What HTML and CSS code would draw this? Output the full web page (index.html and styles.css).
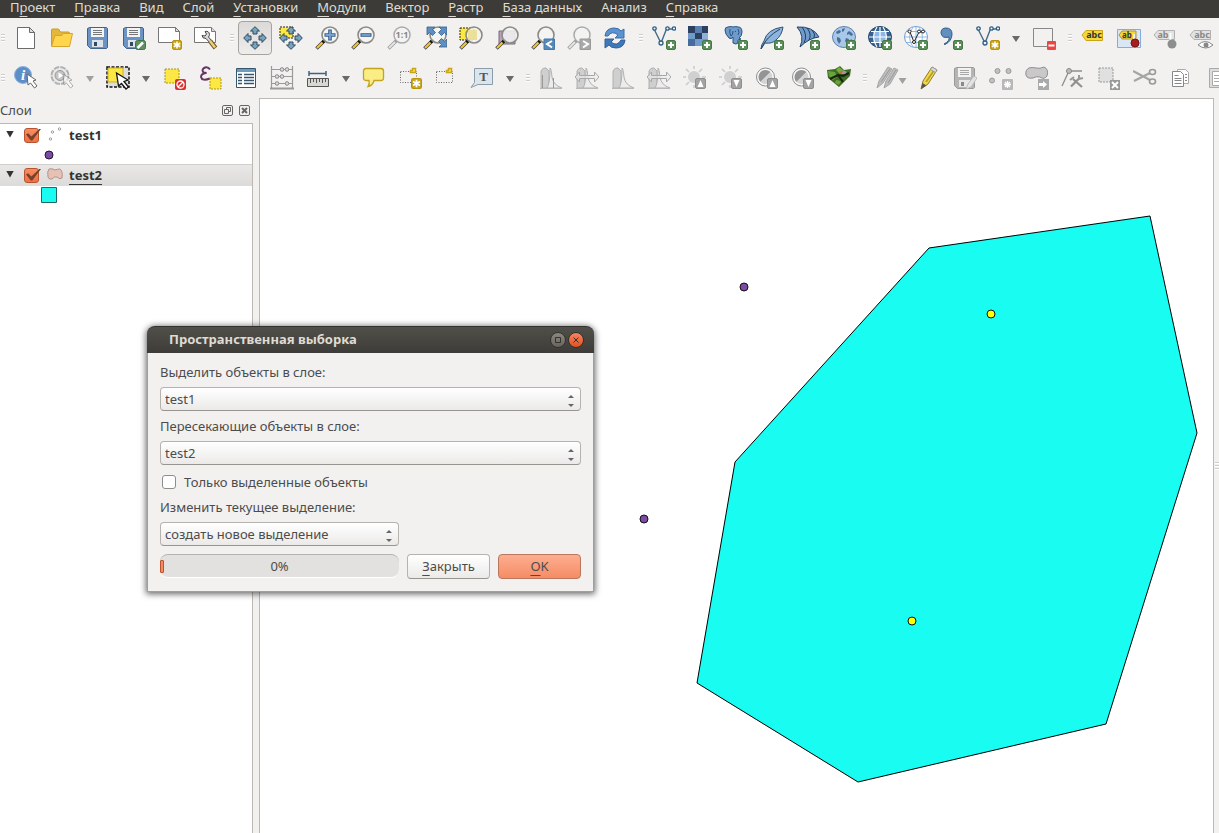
FILE: index.html
```
<!DOCTYPE html>
<html lang="ru">
<head>
    <meta charset="UTF-8">
    <title>QGIS</title>
    <link rel="stylesheet" href="styles.css">
</head>
<body>
    <!-- shared icon parts -->
    <svg class="defs" aria-hidden="true">
        <symbol id="plus" viewBox="0 0 10 10"><rect x=".5" y=".5" width="9" height="9" rx="1.5" fill="#5b905b" stroke="#457a47"/><path d="M5 2v6M2 5h6" stroke="#fff" stroke-width="2"/></symbol>
        <symbol id="star" viewBox="0 0 10 10"><rect x=".5" y=".5" width="9" height="9" rx="1.5" fill="#c9a51c" stroke="#b8930d"/><path d="M5 1.5v7M1.8 3.2l6.4 3.6M8.2 3.2L1.8 6.8" stroke="#fff" stroke-width="1.6"/></symbol>
        <symbol id="up" viewBox="0 0 11 11"><rect x=".5" y=".5" width="10" height="10" rx="1.5" fill="#a3a3a3" stroke="#8e8e8e"/><path d="M5.5 2l3 7h-6z" fill="#fff"/></symbol>
        <symbol id="down" viewBox="0 0 11 11"><rect x=".5" y=".5" width="10" height="10" rx="1.5" fill="#a3a3a3" stroke="#8e8e8e"/><path d="M5.5 9l3-7h-6z" fill="#fff"/></symbol>
        <symbol id="lens" viewBox="0 0 24 24"><path d="M9 15l-7.5 7.5" stroke="#444" stroke-width="3.6"/><path d="M8 16l-6 6" stroke="#f7c52c" stroke-width="2.2"/><path d="M10.5 13.5l-3 3" stroke="#111" stroke-width="3"/><circle cx="15" cy="9" r="8" fill="#f5f5f3" fill-opacity=".85" stroke="#8a8a86" stroke-width="1.6"/></symbol>
        <symbol id="lens-off" viewBox="0 0 24 24"><path d="M10 14l-8.5 8.5" stroke="#999" stroke-width="3.4"/><path d="M8 16l-6 6" stroke="#e4e4e4" stroke-width="2"/><circle cx="15" cy="9" r="8" fill="#f3f3f2" stroke="#aaa" stroke-width="1.5"/></symbol>
        <symbol id="cursor" viewBox="0 0 12 16"><path d="M1 1l1 11 2.500-2 4 5 2.500-2-4-5L10 7z" fill="#fff" stroke="#666"/></symbol>
        <symbol id="cross" viewBox="0 0 24 24"><path d="M12 .7L16.500 5H14v3h-4V5H7.500zM12 23.300L16.500 19H14v-3h-4v3H7.500zM.7 12L5 7.500V10h3v4H5v2.500zM23.300 12L19 7.500V10h-3v4h3v2.500z" fill="#7aa3bb" stroke="#2c4b63"/></symbol>
        <symbol id="nodes" viewBox="0 0 24 24"><path d="M2 3l7 14 5.500-14H22" fill="none" stroke="#456b85" stroke-width="1.4"/><g fill="#eef5fa" stroke="#2f5f86" stroke-width="1.3"><circle cx="2.500" cy="2.500" r="1.700"/><circle cx="9" cy="17" r="2"/><circle cx="15.500" cy="2.500" r="1.700"/><circle cx="22" cy="2.500" r="1.700"/></g></symbol>
        <symbol id="disk" viewBox="0 0 24 24"><path d="M3.500 1.500h17l1 1v19l-1 1h-16l-3-3v-17z" fill="#6b93c4" stroke="#41638b"/><path d="M5 2h13v9H5z" fill="#f3f3f3"/><path d="M7 4.500h9M7 6.500h9M7 8.500h9" stroke="#777"/><path d="M6 14h11v7H6z" fill="#dde3ea"/><path d="M8 16h3v4H8z" fill="#2f4864"/></symbol>
        <symbol id="hist" viewBox="0 0 24 24"><path d="M2 22V5q2-4 5-3l3 3v17z" fill="#cfcfcf" stroke="#b0b0b0"/><path d="M8 22q3-4 3-20 1 0 2 9 1 8 10 11z" fill="#ececec" stroke="#b0b0b0"/><path d="M1 22.500h22" stroke="#b8b8b8"/></symbol>
        <symbol id="span" viewBox="0 0 24 24"><path d="M0 11l4.500-5v3.500h15V6l4.500 5-4.500 5v-3.500h-15V16z" fill="#ededed" fill-opacity=".6" stroke="#a8a8a8"/></symbol>
        <symbol id="bulb" viewBox="0 0 24 24"><g stroke="#cacaca" stroke-width="1.5"><path d="M11 0v3M11 19v3M0 11h3M19 11h4M3 3l3 3M16 6l3-3M3 19l3-3"/></g><circle cx="11" cy="11" r="6" fill="#d0d0d0"/></symbol>
        <symbol id="half" viewBox="0 0 24 24"><circle cx="10.500" cy="11" r="9" fill="#fafafa" stroke="#8d8d8d"/><path d="M15.500 6a7 7 0 1 0-10 10z" fill="#949494"/><path d="M15.500 6a7 7 0 0 1-10 10z" fill="#d4d4d4"/></symbol>
    </svg>

    <nav class="menubar">
        <button>П<u>р</u>оект</button>
        <button><u>П</u>равка</button>
        <button><u>В</u>ид</button>
        <button>С<u>л</u>ой</button>
        <button><u>У</u>становки</button>
        <button><u>М</u>одули</button>
        <button>Век<u>т</u>ор</button>
        <button><u>Р</u>астр</button>
        <button><u>Б</u>аза данных</button>
        <button>Анализ</button>
        <button><u>С</u>правка</button>
    </nav>

    <div class="toolbar">
        <span class="grip first"></span>
        <button class="tool" aria-label="Новый"><svg viewBox="0 0 24 24"><path d="M3.500 1.500h12l5 5v16h-17z" fill="#fff" stroke="#6b6b6b"/><path d="M15.500 1.500v5h5z" fill="#ddd" stroke="#6b6b6b"/></svg></button>
        <button class="tool" aria-label="Открыть"><svg viewBox="0 0 24 24"><path d="M1.500 20V4q0-1 1-1h6l2 3h8q1 0 1 1v3" fill="#e3b63c" stroke="#c99c26"/><path d="M1.500 20.500L5 9.500h7l1-2h9.500l-3 13z" fill="#ffd54b" stroke="#d5a62e"/></svg></button>
        <button class="tool" aria-label="Сохранить"><svg viewBox="0 0 24 24"><use href="#disk"/></svg></button>
        <button class="tool" aria-label="Сохранить как"><svg viewBox="0 0 24 24"><use href="#disk"/><rect x="13.500" y="14.500" width="10" height="9" rx="2" fill="#5b9160" stroke="#3f7445"/><path d="M15.500 22l5.500-5.500" stroke="#fff" stroke-width="2.500"/></svg></button>
        <button class="tool" aria-label="Новая компоновка"><svg viewBox="0 0 24 24"><path d="M.5 1.500h17l4 4v11H.5z" fill="#fff" stroke="#777"/><path d="M17.500 1.500v4h4z" fill="#ddd" stroke="#777"/><use href="#star" x="14" y="14" width="10" height="10"/></svg></button>
        <button class="tool" aria-label="Управление компоновками"><svg viewBox="0 0 24 24"><path d="M.5 1.500h17l4 4v11H.5z" fill="#fff" stroke="#777"/><path d="M17.500 1.500v4h4" fill="#ddd" stroke="#777"/><path d="M8 9.500l3 .5 1.500-2L11 5.500q4-1 4.500 3 0 1-1 2.500l3.500 4-2 2-4-4.500q-4 0-4-3z" fill="#d8d8d8" stroke="#444"/><path d="M16 15l5.500 7" stroke="#705822" stroke-width="4.500"/><path d="M16 15l5 6.500" stroke="#efcf78" stroke-width="2.500"/></svg></button>
        <span class="grip"></span>
        <button class="tool pressed" aria-label="Прокрутка карты"><svg viewBox="0 0 24 24"><use href="#cross"/></svg></button>
        <button class="tool" aria-label="Прокрутка к выделенному"><svg viewBox="0 0 24 24"><path d="M1 1h13v11H1z" fill="#fde742" stroke="#222" stroke-dasharray="2 1"/><use href="#cross"/></svg></button>
        <button class="tool" aria-label="Увеличить"><svg viewBox="0 0 24 24"><use href="#lens"/><path d="M15 3.500v11M9.500 9h11" stroke="#335d8c" stroke-width="3.6"/><path d="M15 4.500v9M10.500 9h9" stroke="#77a2d2" stroke-width="1.800"/></svg></button>
        <button class="tool" aria-label="Уменьшить"><svg viewBox="0 0 24 24"><use href="#lens"/><path d="M9.500 9h11" stroke="#335d8c" stroke-width="3.6"/><path d="M10.500 9h9" stroke="#77a2d2" stroke-width="1.800"/></svg></button>
        <button class="tool" aria-label="Масштаб 1:1"><svg viewBox="0 0 24 24"><use href="#lens-off"/><text x="15" y="12" class="glyph" text-anchor="middle">1:1</text></svg></button>
        <button class="tool" aria-label="Полный охват"><svg viewBox="0 0 24 24"><use href="#lens"/><path d="M4 1h8L9.500 3.500l3 3-3 3-3-3L4 9zM24 1v8l-2.500-2.500-3 3-3-3 3-3L16 1zM24 21h-8l2.500-2.500-3-3 3-3 3 3L24 13z" fill="#5f8fc0" stroke="#355f8b" stroke-width=".8"/></svg></button>
        <button class="tool" aria-label="Увеличить до выделения"><svg viewBox="0 0 24 24"><path d="M1 2h14v12H1z" fill="#fde742" stroke="#222" stroke-dasharray="2 1"/><use href="#lens"/><path d="M9 4h9v10H9z" fill="#e9dc86" fill-opacity=".8"/></svg></button>
        <button class="tool" aria-label="Увеличить до слоя"><svg viewBox="0 0 24 24"><path d="M4 5h16v13H4z" fill="#b7a4b8" stroke="#796a7c"/><use href="#lens"/></svg></button>
        <button class="tool" aria-label="Предыдущий охват"><svg viewBox="0 0 24 24"><use href="#lens"/><path d="M13 13h10.500v10.500H13z" fill="#5688b8" stroke="#4677a8"/><path d="M21 15l-5 3 5 3.500" fill="none" stroke="#fff" stroke-width="2"/></svg></button>
        <button class="tool" aria-label="Следующий охват"><svg viewBox="0 0 24 24"><use href="#lens-off"/><path d="M13 13h10.500v10.500H13z" fill="#a9a9a9" stroke="#999"/><path d="M16 15l5 3-5 3.500" fill="none" stroke="#fff" stroke-width="2"/></svg></button>
        <button class="tool" aria-label="Обновить"><svg viewBox="0 0 24 24"><path d="M2 10Q3 2 11 2q5 0 7 3l3-2v9h-9l3-3q-6-5-10 1z" fill="#5b92d0" stroke="#3a6ca8"/><path d="M22 14q-1 8-9 8-5 0-7-3l-4 3v-9h9l-3 3q6 5 10-2z" fill="#3f78b8" stroke="#2f609a"/></svg></button>
        <span class="grip"></span>
        <button class="tool" aria-label="Добавить векторный слой"><svg viewBox="0 0 24 24"><use href="#nodes"/><use href="#plus" x="14" y="14" width="10" height="10"/></svg></button>
        <button class="tool" aria-label="Добавить растровый слой"><svg viewBox="0 0 24 24"><path d="M0 0h20v20H0z" fill="#6f9bcc"/><path d="M7 0h7v7H7z" fill="#587dae"/><path d="M0 0h7v7H0zM14 0h6v7h-6zM7 7h7v6H7z" fill="#2b3f5f"/><path d="M0 13h7v7H0z" fill="#456c9c"/><path d="M14 7h6v6h-6z" fill="#8db1da"/><use href="#plus" x="14" y="14" width="10" height="10"/></svg></button>
        <button class="tool" aria-label="Добавить слой PostGIS"><svg viewBox="0 0 24 24"><path d="M4 1q3-1 5 0 3-1 5 0 4 0 4 5 0 4-3 6l2 1-3 1v3q-2 2-5 0v-6q-2 3-4 1Q1 8 1 4q0-3 3-3z" fill="#6f9bcc" stroke="#29527f"/><path d="M6 3q-1 4 1 7 2-1 2-5M14 3q2 4 0 6M11.500 5v1" fill="none" stroke="#29527f"/><use href="#plus" x="14" y="14" width="10" height="10"/></svg></button>
        <button class="tool" aria-label="Добавить слой SpatiaLite"><svg viewBox="0 0 24 24"><path d="M1 23q0-4 3-8 3-12 19-14-1 8-7 13-4 4-11 3z" fill="#8db4dc" stroke="#30527a"/><path d="M1 23Q6 11 20 3" fill="none" stroke="#244465"/><use href="#plus" x="14" y="14" width="10" height="10"/></svg></button>
        <button class="tool" aria-label="Добавить слой MSSQL"><svg viewBox="0 0 24 24"><path d="M1 1q16-1 22 10-10 1-19 10Q9 10 1 1z" fill="#6f9bcc" stroke="#244465"/><path d="M6 1q6 8 2 16M11 2q5 6 2 12M16 4q4 4 2 8" fill="none" stroke="#20405f"/><use href="#plus" x="14" y="14" width="10" height="10"/></svg></button>
        <button class="tool" aria-label="Добавить слой WMS"><svg viewBox="0 0 24 24"><ellipse cx="12" cy="11" rx="11.500" ry="10.500" fill="#a9c7e8" stroke="#6080a8"/><path d="M4 6l3-2 2 1-1 2-3 1zM10 3l3-1-1 3-2 1zM5 11l3 1 1 3-2 3-2-4zM15 7l2-2 3 2 1 2-2 1-2-2-2 1zM14 12l3 1-1 4-1 1-2-3zM18 14l2-1-1 3z" fill="#47709f"/><use href="#plus" x="14" y="14" width="10" height="10"/></svg></button>
        <button class="tool" aria-label="Добавить слой WCS"><svg viewBox="0 0 24 24"><ellipse cx="12" cy="11" rx="11.500" ry="10.500" fill="#37628f" stroke="#24486e"/><path d="M6 6h12v10H6z" fill="#8db7e4"/><path d="M1 11h22M3 5.500h18M3 16.500h18M12 1v20M9 1q-7 10 0 20M15 1q7 10 0 20" fill="none" stroke="#fff" stroke-width="1.2"/><use href="#plus" x="14" y="14" width="10" height="10"/></svg></button>
        <button class="tool" aria-label="Добавить слой WFS"><svg viewBox="0 0 24 24"><ellipse cx="12" cy="11" rx="11.500" ry="10.500" fill="#fff" stroke="#6d9dd6"/><path d="M1 11h22M3 5.500h18M3 16.500h18M12 1v20M9 1q-7 10 0 20M15 1q7 10 0 20" fill="none" stroke="#94b8e2"/><path d="M6 6l4 10 5-10h4" fill="none" stroke="#222"/><g fill="#fff" stroke="#222"><circle cx="5.500" cy="5.500" r="1.500"/><circle cx="10" cy="16" r="1.500"/><circle cx="15" cy="5.500" r="1.500"/><circle cx="19" cy="5.500" r="1.500"/></g><use href="#plus" x="14" y="14" width="10" height="10"/></svg></button>
        <button class="tool" aria-label="Добавить текст с разделителями"><svg viewBox="0 0 24 24"><path d="M4 18q6-3 5-7-7 2-8-4Q1 2 6 2q6 0 6 6 0 7-7 10.500z" fill="#608fc0" stroke="#315b89"/><use href="#plus" x="13" y="14" width="10" height="10"/></svg></button>
        <button class="tool" aria-label="Создать слой"><svg viewBox="0 0 24 24"><use href="#nodes"/><use href="#star" x="14" y="14" width="10" height="10"/></svg></button>
        <button class="drop" aria-label="Ещё слои"></button>
        <button class="tool" aria-label="Удалить слой"><svg viewBox="0 0 24 24"><path d="M1.500 2.500h19v18h-19z" fill="#f2f1f0" stroke="#888"/><rect x="15" y="15" width="9" height="9" rx="1" fill="#ef4444"/><path d="M16.500 19.500h6" stroke="#fff" stroke-width="2"/></svg></button>
        <span class="grip"></span>
        <button class="tool" aria-label="Подписи"><svg viewBox="0 0 24 24"><path d="M1 9l4-4.500h16.500v10H5z" fill="#f5d73a" stroke="#c9a51c"/><text x="13" y="12" class="tag" text-anchor="middle">abc</text></svg></button>
        <button class="tool" aria-label="Закрепить подписи"><svg viewBox="0 0 24 24"><path d="M.5 3.500h23v18H.5z" fill="#d8e6f5" stroke="#80aee0"/><path d="M2 9l3-4h14v8H5z" fill="#f5d73a" stroke="#b5942c"/><text x="10" y="12" class="tag small" text-anchor="middle">ab</text><path d="M17 8v7" stroke="#eee" stroke-width="2"/><circle cx="18" cy="17" r="4" fill="#a42020" stroke="#801010"/></svg></button>
        <button class="tool" aria-label="Показать закреплённые"><svg viewBox="0 0 24 24"><path d="M1 9l4-4.500h16.500v9H5z" fill="#e2e2e2" stroke="#b0b0b0"/><text x="10" y="12" class="tag off" text-anchor="middle">ab</text><path d="M17.500 7v8" stroke="#fff" stroke-width="2"/><circle cx="19" cy="18" r="4.500" fill="#8d8d8d"/></svg></button>
        <button class="tool" aria-label="Скрыть подписи"><svg viewBox="0 0 24 24"><path d="M1 9l4-4.500h16.500v9H5z" fill="#e2e2e2" stroke="#b0b0b0"/><text x="13" y="12" class="tag off" text-anchor="middle">abc</text><path d="M9 19q7-7 15 0-7 6-15 0z" fill="#fff" stroke="#888"/><circle cx="17" cy="19" r="2.500" fill="#888"/></svg></button>
    </div>

    <div class="toolbar">
        <span class="grip first"></span>
        <button class="tool" aria-label="Определить"><svg viewBox="0 0 24 24"><circle cx="9" cy="9" r="8.500" fill="#5c8fc8" stroke="#8fb2da"/><text x="9" y="14" class="info" text-anchor="middle">i</text><use href="#cursor" x="12" y="7" width="12" height="16"/></svg></button>
        <button class="tool" aria-label="Выполнить действие"><svg viewBox="0 0 24 24"><circle cx="10" cy="9.500" r="8.500" fill="#e9e9e9" stroke="#b0b0b0" stroke-width="2" stroke-dasharray="5.500 1.200"/><circle cx="10" cy="9.500" r="5" fill="#c4c4c4" stroke="#999"/><path d="M8.500 6.500l5 3-5 3z" fill="#fff"/><use href="#cursor" x="12" y="7" width="12" height="16" opacity=".5"/></svg></button>
        <button class="drop off" aria-label="Действия"></button>
        <button class="tool" aria-label="Выделить объекты"><svg viewBox="0 0 24 24"><path d="M1 1h22v20H1z" fill="#ddd" stroke="#111" stroke-width="1.500" stroke-dasharray="3 1.500"/><path d="M2 2h15v14H2z" fill="#fde742" stroke="#c7b32c"/><path d="M10.500 7l2 13 3-2.500 4.500 5.500 2.500-2-4.500-5.500 4-1.500z" fill="#fff" stroke="#111" stroke-width="1.300"/></svg></button>
        <button class="drop" aria-label="Способ выделения"></button>
        <button class="tool" aria-label="Снять выделение"><svg viewBox="0 0 24 24"><path d="M3 3h14v14H3z" fill="#fde742" stroke="#a8952a" stroke-dasharray="2 1"/><rect x="13" y="13" width="11" height="11" rx="2" fill="#da3030"/><circle cx="18.500" cy="18.500" r="3.500" fill="none" stroke="#fff" stroke-width="1.300"/><path d="M16 21l5-5" stroke="#fff" stroke-width="1.300"/></svg></button>
        <button class="tool" aria-label="Выделить по выражению"><svg viewBox="0 0 24 24"><path d="M12 3.500Q10 .5 7 1.500q-4 2-1.500 5l3 .5Q3 7.500 3 11q1 4.500 9 1.500" fill="none" stroke="#673764" stroke-width="2"/><path d="M12 12h11v11H12z" fill="#fde742" stroke="#a8952a" stroke-dasharray="2 1"/></svg></button>
        <button class="tool" aria-label="Таблица атрибутов"><svg viewBox="0 0 24 24"><path d="M2.500 2.500h19v19h-19z" fill="#fff" stroke="#35566f"/><path d="M3 3h18v3H3z" fill="#6d9cbb"/><path d="M4 8.500h4M10 8.500h10M4 11.500h4M10 11.500h10M4 14.500h4M10 14.500h10M4 17.500h4M10 17.500h10" stroke="#35566f" stroke-width="1.400"/></svg></button>
        <button class="tool" aria-label="Калькулятор полей"><svg viewBox="0 0 24 24"><path d="M1.500 0v22M22.500 0v22M2 3.500h20M2 10.500h20M2 17.500h20" fill="none" stroke="#9a9a9a" stroke-width="1.2"/><path d="M0 22.500h24" stroke="#9a9a9a" stroke-width="2"/><g fill="#ddd" stroke="#888"><circle cx="12" cy="3.500" r="1.800"/><circle cx="17" cy="3.500" r="1.800"/><circle cx="7" cy="10.500" r="1.800"/><circle cx="12" cy="10.500" r="1.800"/><circle cx="7" cy="17.500" r="1.800"/><circle cx="17" cy="17.500" r="1.800"/></g></svg></button>
        <button class="tool" aria-label="Измерить линию"><svg viewBox="0 0 24 24"><path d="M3 7.500h17M3 5v5M20 5v5" stroke="#3c6482" stroke-width="1.500"/><path d="M1.500 12.500h21v8h-21z" fill="#d8d8d2" stroke="#555"/><path d="M4.500 13v4M7.500 13v3M10.500 13v4M13.500 13v3M16.500 13v4M19.500 13v3" stroke="#555"/></svg></button>
        <button class="drop" aria-label="Измерения"></button>
        <button class="tool" aria-label="Всплывающие описания"><svg viewBox="0 0 24 24"><path d="M4 2.500h15q2.500 0 2.500 2.500v7q0 2.500-2.500 2.500h-7q-1 5-6 6 2-3 1-6H4Q1.500 14.500 1.500 12V5Q1.500 2.500 4 2.500z" fill="#fbed86" stroke="#c3a420" stroke-width="1.300"/></svg></button>
        <button class="tool" aria-label="Новая закладка"><svg viewBox="0 0 24 24"><path d="M2.500 5.500h16v11h-16z" fill="none" stroke="#666" stroke-dasharray="1 1.500"/><path d="M14.500 2.500h3v4h-5v-2h2z" fill="#fde742" stroke="#c9a51c" stroke-width="1.500"/><use href="#star" x="13" y="12" width="11" height="11"/></svg></button>
        <button class="tool" aria-label="Закладки"><svg viewBox="0 0 24 24"><path d="M2.500 5.500h16v11h-16z" fill="none" stroke="#666" stroke-dasharray="1 1.500"/><path d="M14.500 2.500h3v4h-5v-2h2z" fill="#fde742" stroke="#c9a51c" stroke-width="1.500"/></svg></button>
        <button class="tool" aria-label="Аннотация"><svg viewBox="0 0 24 24"><path d="M4.500 2.500h18v16H8l-7 3 3.500-5z" fill="#dbe5ed" stroke="#8b9cab"/><text x="13.500" y="15" class="note" text-anchor="middle">T</text></svg></button>
        <button class="drop" aria-label="Аннотации"></button>
        <span class="grip"></span>
        <button class="tool" aria-label="Растяжение локальное"><svg viewBox="0 0 24 24"><use href="#hist"/><path d="M3.500 22V9M14.500 22V12" stroke="#999"/></svg></button>
        <button class="tool" aria-label="Растяжение полное"><svg viewBox="0 0 24 24"><use href="#hist"/><use href="#span"/></svg></button>
        <button class="tool" aria-label="Гистограмма"><svg viewBox="0 0 24 24"><use href="#hist"/></svg></button>
        <button class="tool" aria-label="Растянуть гистограмму"><svg viewBox="0 0 24 24"><use href="#hist"/><use href="#span"/></svg></button>
        <button class="tool" aria-label="Увеличить яркость"><svg viewBox="0 0 24 24"><use href="#bulb"/><use href="#up" x="12" y="12" width="11" height="11"/></svg></button>
        <button class="tool" aria-label="Уменьшить яркость"><svg viewBox="0 0 24 24"><use href="#bulb"/><use href="#down" x="12" y="12" width="11" height="11"/></svg></button>
        <button class="tool" aria-label="Увеличить контраст"><svg viewBox="0 0 24 24"><use href="#half"/><use href="#up" x="12" y="12" width="11" height="11"/></svg></button>
        <button class="tool" aria-label="Уменьшить контраст"><svg viewBox="0 0 24 24"><use href="#half"/><use href="#down" x="12" y="12" width="11" height="11"/></svg></button>
        <button class="tool" aria-label="GRASS"><svg viewBox="0 0 24 24"><path d="M0 4l8-1 5-3 4 4 7-1-1 7-11 11L1 12z" fill="#3f6b24"/><path d="M1 5l7 1 2 5-4 3-4-4z" fill="#6aa33a"/><path d="M12 1l4 3-3 4-4-4z" fill="#74ad40"/><path d="M9 14l5 1-2 4-4-2z" fill="#6aa33a"/><path d="M3 13l8-4 5 1 6-3M11 9l5 7" fill="none" stroke="#14240d" stroke-width="2"/><path d="M14 8l2-4 4 2-2 2z" fill="#a097a0"/><path d="M13 7l2-1" stroke="#d06b38" stroke-width="2"/></svg></button>
        <span class="grip"></span>
        <button class="tool split" aria-label="Текущие правки"><svg viewBox="0 0 24 24"><path d="M2 22l2-7 9-14 4 2-9 14zM9 22l2-7 8-13 4 2-8 14z" fill="#bdbdbd" stroke="#a5a5a5"/><path d="M6 16l9-13M13 17l8-13" stroke="#989898"/></svg><i class="arrow"></i></button>
        <button class="tool" aria-label="Режим редактирования"><svg viewBox="0 0 24 24"><path d="M4 23l2-8 9-14 5 3-9 14z" fill="#f0d84a" stroke="#8f7c29"/><path d="M9 16l9-13" stroke="#b59c2a" stroke-width="1.500"/><path d="M15 1l5 3-1.500 2.500-5-3z" fill="#ddd" stroke="#999"/><path d="M4 23l1.500-6 4 2.500z" fill="#555"/></svg></button>
        <button class="tool" aria-label="Сохранить правки"><svg viewBox="0 0 24 24" class="gray"><use href="#disk"/><path d="M13 23l2-5 6-8 3 2-6 9z" fill="#ddd" stroke="#999"/></svg></button>
        <button class="tool" aria-label="Добавить объект"><svg viewBox="0 0 24 24"><g fill="#c0c0c0" stroke="#999"><circle cx="3" cy="14.500" r="2.500"/><circle cx="8.500" cy="5" r="2.500"/><circle cx="19.500" cy="5" r="2.500"/></g><rect x="13" y="13" width="11" height="11" rx="1" fill="#b8b8b8"/><path d="M18.500 15v7M15 18.500h7M16 16l5 5M21 16l-5 5" stroke="#fff" stroke-width="1.300"/></svg></button>
        <button class="tool" aria-label="Переместить объект"><svg viewBox="0 0 24 24"><path d="M4 2q3-1 7 0t8-1q5 2 3 9-3 4-7 1-4-1-7 1-6 1-7-3Q0 4 4 2z" fill="#c9c9c9" stroke="#8e8e8e"/><path d="M13 13h11v11H13z" fill="#aaa"/><path d="M14 17h4v-2l4 3.500-4 3.500v-2h-4z" fill="#fff"/></svg></button>
        <button class="tool" aria-label="Редактирование узлов"><svg viewBox="0 0 24 24"><path d="M1 20L8 5h13" fill="none" stroke="#8e8e8e" stroke-width="1.300"/><circle cx="8" cy="5" r="2.500" fill="#bbb" stroke="#888"/><path d="M10 20.500l9-9M12 13l9 8" stroke="#909090" stroke-width="2.2"/><path d="M9 14l4-3M18 9v4l4-1" stroke="#999" stroke-width="2" fill="none"/></svg></button>
        <button class="tool" aria-label="Удалить выделенное"><svg viewBox="0 0 24 24"><path d="M2 2h14v14H2z" fill="#e0e0e0" stroke="#999" stroke-dasharray="2 1"/><path d="M13 14h10v10H13z" fill="#999"/><path d="M15 16l6 6M21 16l-6 6" stroke="#fff" stroke-width="2"/></svg></button>
        <button class="tool" aria-label="Вырезать"><svg viewBox="0 0 24 24"><path d="M0 5l17 9M1 15l16-8" stroke="#a5a5a5" stroke-width="2.200"/><ellipse cx="19.500" cy="6" rx="3" ry="2.500" fill="none" stroke="#999" stroke-width="1.600"/><ellipse cx="19.500" cy="15.500" rx="3" ry="2.500" fill="none" stroke="#999" stroke-width="1.600"/></svg></button>
        <button class="tool" aria-label="Копировать"><svg viewBox="0 0 24 24"><path d="M8.500 3.500h8l3 3v11h-11z" fill="#fff" stroke="#aaa"/><path d="M3.500 5.500h8l3 3v12h-11z" fill="#fff" stroke="#888"/><path d="M5.500 9.500h4M5.500 12.500h7M5.500 14.500h7M5.500 17.500h7M16 8.500h2M16 11.500h2M16 14.500h2" stroke="#888"/></svg></button>
        <button class="tool" aria-label="Вставить"><svg viewBox="0 0 24 24"><path d="M4.500 2.500h18v19h-18z" fill="#ddd" stroke="#aaa"/><path d="M7.500 5.500h14v14h-14z" fill="#fff" stroke="#aaa"/><path d="M9 9.500h10M9 12.500h10M9 15.500h10" stroke="#aaa"/></svg></button>
    </div>

    <main class="workspace">
        <section class="layers">
            <header class="panel-head">
                <h2>Слои</h2>
                <button aria-label="Открепить"><svg viewBox="0 0 12 12"><rect x=".5" y=".5" width="10" height="10" rx="1.500"/><path d="M4.500 4.500v-2h4v4h-2M2.500 4.500h4v4h-4z"/></svg></button>
                <button aria-label="Закрыть панель"><svg viewBox="0 0 12 12"><rect x=".5" y=".5" width="10" height="10" rx="1.500"/><path d="M3 3l5 5M8 3L3 8" stroke-width="2"/></svg></button>
            </header>
            <ul class="tree">
                <li class="layer">
                    <i class="twist"></i>
                    <input type="checkbox" id="layer1" checked>
                    <svg viewBox="0 0 16 16" class="kind"><g fill="#fff" stroke="#888" stroke-width=".8"><circle cx="3.500" cy="12" r="1.200"/><circle cx="5.500" cy="5" r="1.200"/><circle cx="12.500" cy="2" r="1.200"/></g></svg>
                    <label for="layer1">test1</label>
                </li>
                <li class="legend"><svg viewBox="0 0 16 16"><circle cx="8" cy="8" r="4" fill="#7d4ba6" stroke="#221530"/></svg></li>
                <li class="layer selected">
                    <i class="twist"></i>
                    <input type="checkbox" id="layer2" checked>
                    <svg viewBox="0 0 16 16" class="kind"><path d="M2 2q3-1 6 1 3-1 5-1 3 2 2 9-2 2-5-1-3-1-5 2-3 1-4-2-1-6 1-8z" fill="#e5c1b6" stroke="#b69387"/></svg>
                    <label for="layer2"><u>test2</u></label>
                </li>
                <li class="legend"><svg viewBox="0 0 16 16"><path d="M.5.5h15v15H.5z" fill="#18fcf2" stroke="#226666"/></svg></li>
            </ul>
        </section>

        <section class="map">
            <svg viewBox="0 0 953 734">
                <path class="area" d="M669 149L890 117 937 334 846 625 598 683 437 584 475 363z"/>
                <g class="points">
                    <circle cx="484" cy="188" r="4"/>
                    <circle cx="384" cy="420" r="4"/>
                </g>
                <g class="points picked">
                    <circle cx="731" cy="215" r="4"/>
                    <circle cx="652" cy="522" r="4"/>
                </g>
            </svg>
        </section>
        <div class="edge"><span class="edge-grip"></span></div>
    </main>

    <form class="dialog">
        <header class="titlebar">
            <h1>Пространственная выборка</h1>
            <button type="button" aria-label="Развернуть"><svg viewBox="0 0 14 14"><path d="M4.500 4.500h5v5h-5z"/></svg></button>
            <button type="button" class="close" aria-label="Закрыть окно"><svg viewBox="0 0 14 14"><path d="M4.500 4.500l5 5M9.500 4.500l-5 5"/></svg></button>
        </header>
        <div class="dialog-body">
            <label class="caption" for="source">Выделить объекты в слое:</label>
            <div class="combo"><select id="source"><option>test1</option></select></div>
            <label class="caption" for="target">Пересекающие объекты в слое:</label>
            <div class="combo"><select id="target"><option>test2</option></select></div>
            <label class="check"><input type="checkbox">Только выделенные объекты</label>
            <label class="caption" for="mode">Изменить текущее выделение:</label>
            <div class="combo short"><select id="mode"><option>создать новое выделение</option></select></div>
            <div class="actions">
                <div class="progress" role="progressbar" aria-valuenow="0"><span class="bar"></span>0%</div>
                <button type="button" class="btn"><u>З</u>акрыть</button>
                <button type="button" class="btn primary"><u>O</u>K</button>
            </div>
        </div>
    </form>
</body>
</html>
```

FILE: styles.css
```
* {
    box-sizing: border-box;
}
body {
    margin: 0;
    height: 100vh;
    display: flex;
    flex-direction: column;
    overflow: hidden;
    background: #f2f1f0;
    color: #4c4c4c;
    font-family: "Noto Sans", sans-serif;
    font-size: 13px;
    line-height: 20px;
}
button, select, input {
    margin: 0;
    padding: 0;
    border: 0;
    background: none;
    color: inherit;
    font: inherit;
}
h1, h2, ul {
    margin: 0;
    padding: 0;
    font-size: 13px;
}
svg {
    display: block;
}
u {
    text-underline-offset: 4px;
    text-decoration-skip-ink: none;
}
.defs {
    position: absolute;
    width: 0;
    height: 0;
}

/* menu */
.menubar {
    display: flex;
    flex: none;
    gap: 19px;
    height: 18px;
    padding-left: 10px;
    background: #3c3b37;
    color: #dfdbd2;
}
.menubar button {
    height: 14px;
    line-height: 14px;
    white-space: nowrap;
}

/* toolbars */
.toolbar {
    display: flex;
    flex: none;
    align-items: center;
    height: 40px;
    overflow: hidden;
}
.tool {
    display: flex;
    flex: none;
    align-items: center;
    justify-content: center;
    width: 34px;
    height: 34px;
    margin: 0 1px;
    border: 1px solid transparent;
    border-radius: 4px;
}
.tool svg {
    flex: none;
    width: 24px;
    height: 24px;
}
.tool.pressed {
    border-color: #a5a39f;
    background: linear-gradient(#dcdad8, #eeedec);
}
.tool.split {
    width: 39px;
}
.gray {
    filter: grayscale(1);
    opacity: 0.6;
}
.drop {
    flex: none;
    width: 20px;
    height: 34px;
}
.drop::before, .arrow {
    content: "";
    display: block;
    width: 8px;
    height: 6px;
    margin: 2px auto 0;
    background: #6a6a6a;
    clip-path: polygon(0 0, 100% 0, 50% 100%);
}
.drop.off::before, .arrow {
    background: #a0a0a0;
}
.arrow {
    margin: 6px 0 0;
}
.grip {
    flex: none;
    width: 13px;
    height: 8px;
    background: repeating-linear-gradient(#cfcdcb 0 1px, #fff 1px 2px, transparent 2px 3px) 6px 0 / 4px 8px no-repeat;
}
.grip.first {
    width: 8px;
    background-position: 1px 0;
}
.glyph {
    font: bold 9px "Noto Sans", sans-serif;
    fill: #888;
}
.tag {
    font: bold 9px "Noto Sans", sans-serif;
    fill: #333;
}
.tag.small {
    font-size: 8px;
}
.tag.off {
    fill: #888;
}
.info {
    font: italic bold 15px "Liberation Serif", serif;
    fill: #fff;
}
.note {
    font: bold 13px "Liberation Serif", serif;
    fill: #555;
}

/* layers panel */
.workspace {
    display: flex;
    flex: 1;
    min-height: 0;
}
.layers {
    display: flex;
    flex: none;
    flex-direction: column;
    width: 253px;
    margin-right: 6px;
}
.panel-head {
    display: flex;
    align-items: center;
    gap: 5px;
    height: 25px;
    padding-right: 2px;
}
.panel-head h2 {
    flex: 1;
    padding-bottom: 2px;
    font-weight: normal;
}
.panel-head svg {
    width: 12px;
    height: 12px;
    fill: none;
    stroke: #666;
}
.tree {
    flex: 1;
    padding-top: 1px;
    border: 1px solid #bcb9b5;
    border-width: 1px 1px 0 0;
    background: #fff;
    list-style: none;
}
.layer {
    display: flex;
    align-items: center;
    height: 20px;
    padding-left: 6px;
    color: #333;
    font-weight: bold;
}
.layer.selected {
    height: 22px;
    margin: -1px 0;
    background: linear-gradient(#e9e8e7, #dcdbd9);
    box-shadow: inset 0 1px #d0cfcc;
}
.twist {
    width: 8px;
    height: 7px;
    margin: 0 10px 2px 0;
    background: #333;
    clip-path: polygon(0 0, 100% 0, 50% 100%);
}
.layer input {
    position: relative;
    width: 15px;
    height: 15px;
    appearance: none;
    border: 1px solid #b9532d;
    border-radius: 3px;
    background: linear-gradient(#f98d63, #ee7044);
}
.layer input:checked::after {
    content: "";
    position: absolute;
    left: 1px;
    top: 0;
    width: 15px;
    height: 12px;
    background: #7a4029;
    clip-path: polygon(0 50%, 14% 40%, 36% 66%, 92% 0, 100% 5%, 42% 100%, 32% 100%);
}
.kind {
    width: 16px;
    height: 16px;
    margin: 0 6px 0 8px;
}
.legend {
    display: flex;
    align-items: center;
    height: 20px;
    padding-left: 41px;
}
.legend svg {
    width: 16px;
    height: 16px;
}

/* map */
.map {
    flex: 1;
    min-width: 0;
    border: 1px solid #bcb9b5;
    border-bottom: 0;
    background: #fff;
}
.map svg {
    width: 100%;
    height: 100%;
}
.area {
    fill: #18fcf2;
    stroke: #000;
}
.points {
    fill: #7d4ba6;
    stroke: #111;
}
.picked {
    fill: #ffff00;
}
.edge {
    display: flex;
    flex: none;
    align-items: center;
    width: 5px;
}
.edge-grip {
    width: 4px;
    height: 8px;
    margin-left: 1px;
    background: repeating-linear-gradient(#cfcdcb 0 1px, #fff 1px 2px, transparent 2px 3px);
}

/* dialog window */
.dialog {
    position: absolute;
    left: 147px;
    top: 326px;
    width: 447px;
    border: 1px solid #a19f9b;
    border-top: 0;
    border-radius: 8px 8px 0 0;
    background: #f2f1f0;
    box-shadow: 0 1px 6px 1px rgba(0, 0, 0, 0.6);
}
.titlebar {
    display: flex;
    align-items: center;
    gap: 2px;
    height: 27px;
    margin: 0 -1px;
    padding: 0 10px 0 22px;
    border-top: 1px solid #33322e;
    border-radius: 8px 8px 0 0;
    background: linear-gradient(#504f49, #3d3c38);
    color: #dfdbd2;
}
.titlebar h1 {
    flex: 1;
    padding-bottom: 2px;
}
.titlebar button {
    border: 1px solid #33322e;
    border-radius: 50%;
    background: linear-gradient(#8b8980, #65635c);
}
.titlebar button.close {
    background: linear-gradient(#f58562, #e3501f);
}
.titlebar svg {
    width: 14px;
    height: 14px;
    fill: none;
    stroke: #33322e;
}
.dialog-body {
    padding: 4px 12px 12px;
}
.caption {
    display: block;
    line-height: 30px;
}
.combo {
    position: relative;
}
.combo.short {
    width: 239px;
}
.combo select {
    display: block;
    width: 100%;
    height: 24px;
    padding: 0 24px 0 4px;
    appearance: none;
    border: 1px solid #b6b3af;
    border-bottom-color: #979590;
    border-radius: 4px;
    background: linear-gradient(#fff, #ebeae9);
}
.combo::before, .combo::after {
    content: "";
    position: absolute;
    right: 7px;
    top: 8px;
    width: 6px;
    height: 3px;
    background: #666;
    clip-path: polygon(50% 0, 100% 100%, 0 100%);
}
.combo::after {
    top: 17px;
    clip-path: polygon(0 0, 100% 0, 50% 100%);
}
.check {
    display: flex;
    align-items: center;
    gap: 8px;
    height: 27px;
    padding: 7px 0 0 2px;
}
.check input {
    width: 14px;
    height: 14px;
    appearance: none;
    border: 1px solid #8f8d89;
    border-radius: 3px;
    background: #fff;
}
.actions {
    display: flex;
    gap: 8px;
    margin-top: 8px;
}
.progress {
    display: flex;
    flex: 1;
    align-items: center;
    justify-content: center;
    position: relative;
    height: 24px;
    border-top: 1px solid #b6b3af;
    border-bottom: 1px solid #fff;
    border-radius: 8px;
    background: #e3e1df;
}
.bar {
    position: absolute;
    left: 0;
    top: 5px;
    width: 4px;
    height: 13px;
    border: 1px solid #b9532d;
    border-radius: 1px;
    background: #f58a60;
}
.btn {
    width: 83px;
    height: 25px;
    padding-bottom: 1px;
    border: 1px solid #b6b3af;
    border-bottom-color: #979590;
    border-radius: 4px;
    background: linear-gradient(#fff, #ebeae9);
}
.btn.primary {
    border-color: #b9775d;
    background: linear-gradient(#fdae90, #f58c66);
}
```
